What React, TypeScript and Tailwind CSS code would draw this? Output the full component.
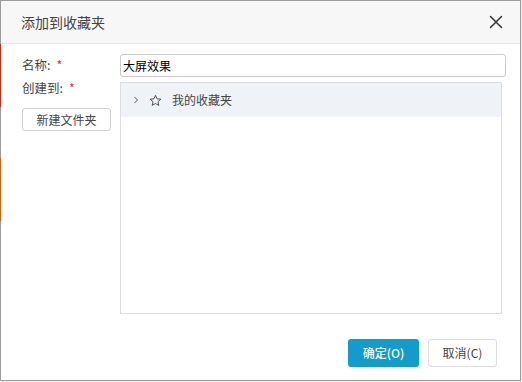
import React from "react";

const font = { fontFamily: '"Noto Sans CJK SC", "Noto Sans", sans-serif' };

export default function App() {
  return (
    <div className="w-[522px] h-[382px] bg-[#eeeeee] overflow-hidden" style={font}>
      <div className="w-[521px] h-[381px] flex bg-white border-t border-r border-b border-[#9c9c9c]">
        {/* left edge strip */}
        <div className="w-px flex flex-col shrink-0">
          <div className="h-[43px] bg-[#9c9c9c]" />
          <div className="h-[63px] bg-[#b5301f]" />
          <div className="h-[51px] bg-[#9c9c9c]" />
          <div className="h-[63px] bg-[#c0651a]" />
          <div className="flex-1 bg-[#9c9c9c]" />
        </div>
        <div className="flex-1 flex flex-col">
          {/* header */}
          <div className="h-[43px] bg-[#f7f7f7] border-b border-[#e6e6e6] flex items-center justify-between pl-[20px] pr-[17px] shrink-0">
            <span className="text-[14px] text-[#444]">添加到收藏夹</span>
            <svg width="14" height="14" viewBox="0 0 14 14" className="text-[#333]">
              <path d="M1.5 1.5 L12.5 12.5 M12.5 1.5 L1.5 12.5" stroke="currentColor" strokeWidth="1.5" strokeLinecap="round" />
            </svg>
          </div>
          {/* body */}
          <div className="flex pt-[10px] pl-[21px] h-[270px]">
            <div className="w-[98px] flex flex-col shrink-0">
              <div className="h-[23px] flex items-center text-[12.5px] text-[#444]">
                名称:<span className="text-[#f5222d] ml-[6px]">*</span>
              </div>
              <div className="h-[23px] flex items-center text-[12.5px] text-[#444]">
                创建到:<span className="text-[#f5222d] ml-[6px]">*</span>
              </div>
              <button className="mt-[8px] w-[89px] h-[23px] border border-[#cfcfcf] rounded-[3px] bg-white text-[12px] text-[#444] flex items-center justify-center">
                新建文件夹
              </button>
            </div>
            <div className="flex flex-col">
              <div className="w-[386px] h-[23px] border border-[#cccccc] rounded-[3px] flex items-center pl-[2px] text-[12px] text-black">
                大屏效果
              </div>
              <div className="mt-[5px] w-[382px] h-[232px] border border-[#dddddd]">
                <div className="h-[34px] bg-[#eff3f7] flex items-center">
                  <svg width="6" height="8" viewBox="0 0 6 8" className="ml-[12px] text-[#555]">
                    <path d="M1.5 1 L4.5 4 L1.5 7" stroke="currentColor" strokeWidth="1" fill="none" />
                  </svg>
                  <svg width="13" height="13" viewBox="0 0 24 24" className="ml-[10px] text-[#444]">
                    <path d="M12 2.5 L14.9 8.9 L21.8 9.6 L16.6 14.2 L18.1 21 L12 17.5 L5.9 21 L7.4 14.2 L2.2 9.6 L9.1 8.9 Z" stroke="currentColor" strokeWidth="1.7" fill="none" strokeLinejoin="round" />
                  </svg>
                  <span className="ml-[10px] text-[12px] text-[#444]">我的收藏夹</span>
                </div>
              </div>
            </div>
          </div>
          {/* footer */}
          <div className="flex justify-end pr-[23px] pt-[25px] gap-[9px]">
            <button className="w-[71px] h-[28px] rounded-[3px] bg-[#149bcb] text-white text-[12px] font-medium flex items-center justify-center">
              确定(O)
            </button>
            <button className="w-[69px] h-[28px] rounded-[3px] border border-[#dddddd] bg-white text-[#444] text-[12px] flex items-center justify-center">
              取消(C)
            </button>
          </div>
        </div>
      </div>
    </div>
  );
}
